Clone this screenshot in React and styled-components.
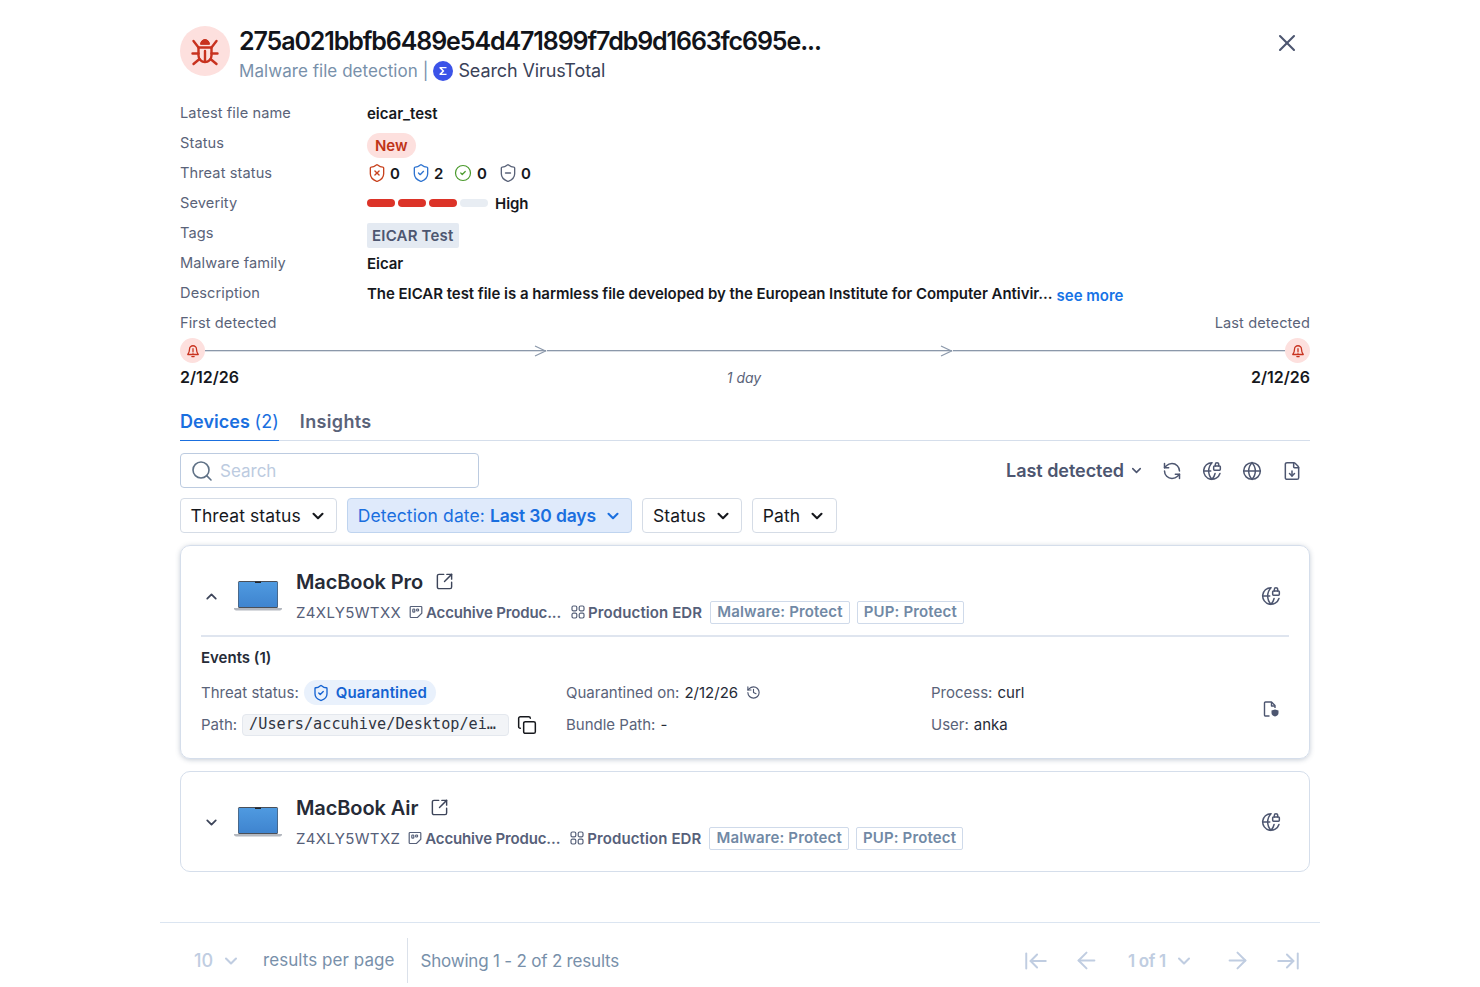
import React from "react";
import styled, { createGlobalStyle } from "styled-components";
import {
  X,
  ShieldX,
  ShieldCheck,
  ShieldMinus,
  CircleCheck,
  ChevronDown,
  ChevronUp,
  Search as SearchIcon,
  RefreshCcw,
  Globe,
  GlobeLock,
  FileDown,
  SquareArrowOutUpRight,
  Copy,
  History,
  ArrowLeft,
  ArrowRight,
  ArrowLeftToLine,
  ArrowRightToLine,
} from "lucide-react";

const GlobalStyle = createGlobalStyle`
  html, body { margin: 0; padding: 0; background: #fff; }
  body { font-family: Inter, "Noto Sans", sans-serif; color: #16181d; overflow: hidden; }
  * { box-sizing: border-box; }
`;

const BugIcon = () => (
  <svg width="30" height="30" viewBox="0 0 30 30" fill="none" stroke="#c8321f" strokeWidth="2.400" strokeLinecap="round" strokeLinejoin="round">
    <path d="M10.500 8a4.500 4.500 0 0 1 9 0z" fill="#c8321f" strokeWidth="1" />
    <path d="M8.500 11.500h13v8a6.500 6.500 0 0 1-13 0z" />
    <path d="M15 15v10M3.500 5l5 6.500M26.500 5l-5 6.500M2.500 17.500h6M27.500 17.500h-6M3.500 28l6-5M26.500 28l-6-5" />
  </svg>
);

const SigmaLogo = () => (
  <svg width="20" height="20" viewBox="0 0 20 20">
    <circle cx="10" cy="10" r="10" fill="#3b53e8" />
    <path d="M6.500 6h7v1.300H8.800L11.400 10l-2.600 2.700h4.700V14h-7v-1.200L9.300 10 6.500 7.200z" fill="#fff" />
  </svg>
);

const BellAlert = () => (
  <svg width="14" height="14" viewBox="0 0 24 24" fill="none" stroke="#c8321f" strokeWidth="2.200" strokeLinecap="round" strokeLinejoin="round">
    <path d="M12 3a6 6 0 0 0-6 6c0 5-1.500 7-3 9h18c-1.500-2-3-4-3-9a6 6 0 0 0-6-6z" />
    <path d="M10 21.500h4M12 8v5M12 15.500v.2" />
  </svg>
);

const OrgIcon = () => (
  <svg width="14" height="14" viewBox="0 0 14 14" fill="none" stroke="#566079" strokeWidth="1.200">
    <path d="M2 1.500h10a.8.8 0 0 1 .8.8v6L8.500 12.500H2a.8.8 0 0 1-.8-.8V2.300a.8.8 0 0 1 .8-.8z" />
    <rect x="3.800" y="4" width="2" height="3.200" rx=".8" />
    <rect x="7.600" y="4" width="2" height="2" rx=".8" />
  </svg>
);

const GroupIcon = () => (
  <svg width="14" height="14" viewBox="0 0 14 14" fill="none" stroke="#566079" strokeWidth="1.200">
    <rect x="1" y="1" width="4.800" height="4.800" rx="1.400" />
    <rect x="8.200" y="1" width="4.800" height="4.800" rx="1.400" />
    <rect x="1" y="8.200" width="4.800" height="4.800" rx="1.400" />
    <rect x="8.200" y="8.200" width="4.800" height="4.800" rx="1.400" />
  </svg>
);

const FileShield = () => (
  <svg width="20" height="20" viewBox="0 0 20 20" fill="none" stroke="#4d5670" strokeWidth="1.400" strokeLinejoin="round">
    <path d="M8.500 17H4.500a1 1 0 0 1-1-1V4a1 1 0 0 1 1-1h6l3.500 3.500V9" />
    <path d="M10.500 3v4h3.500" />
    <path d="M14 10.500l3.500 1v2.500c0 1.800-1.500 3-3.500 3.500-2-.5-3.500-1.700-3.500-3.500v-2.500z" fill="#4d5670" stroke="none" />
  </svg>
);

const LaptopArt = ({ id }) => (
  <svg width="50" height="36" viewBox="0 0 50 36">
    <defs>
      <linearGradient id={id} x1="0" y1="0" x2="0" y2="1">
        <stop offset="0" stopColor="#4f9ae0" />
        <stop offset="1" stopColor="#3f84cf" />
      </linearGradient>
    </defs>
    <rect x="5" y="3" width="40" height="27" rx="1.500" fill="#4a4f58" />
    <rect x="5.600" y="4" width="38.800" height="25" fill={`url(#${id})`} />
    <rect x="22" y="3.500" width="6" height="1.500" fill="#23262b" />
    <path d="M1 30h48v1c0 .8-1.500 1.500-3 1.500H4c-1.500 0-3-.7-3-1.500z" fill="#b4b8bf" />
  </svg>
);

const Page = styled.div`
  width: 1480px;
  height: 987px;
  display: flex;
  flex-direction: column;
`;

const Content = styled.div`
  padding: 26px 170px 0 180px;
  flex: 1;
`;

const Header = styled.div`
  display: flex;
  align-items: flex-start;
  height: 60px;
`;

const BugCircle = styled.div`
  width: 50px;
  height: 50px;
  border-radius: 50%;
  background: #fde0de;
  display: flex;
  align-items: center;
  justify-content: center;
  margin-right: 9px;
  flex: none;
`;

const HeadText = styled.div`
  flex: 1;
`;

const Title = styled.div`
  font-size: 25px;
  line-height: 30px;
  font-weight: 600;
  letter-spacing: -1.1px;
  color: #12141a;
`;

const SubLine = styled.div`
  display: flex;
  align-items: center;
  font-size: 17px;
  line-height: 30px;
  letter-spacing: 0.05px;
  color: #7890aa;
  gap: 5px;
`;

const VtLink = styled.span`
  color: #3a4258;
  font-size: 18px;
  letter-spacing: -0.1px;
`;

const CloseBtn = styled.div`
  margin: 3px 9px 0 0;
  color: #4d5670;
  display: flex;
`;

const Details = styled.div`
  margin-top: 12px;
`;

const Row = styled.div`
  display: grid;
  grid-template-columns: 187px 1fr;
  height: 30px;
  align-items: center;
  font-size: 15px;
`;

const Label = styled.div`
  color: #5a6379;
  font-size: 14.600px;
  letter-spacing: 0.1px;
`;

const Value = styled.div`
  display: flex;
  align-items: center;
  font-weight: 600;
  font-size: 15px;
  letter-spacing: -0.04px;
  color: #16181d;
  white-space: nowrap;
`;

const NewBadge = styled.span`
  background: #fde0de;
  color: #bf3317;
  font-weight: 600;
  font-size: 15px;
  padding: 0 8px;
  height: 25px;
  line-height: 25px;
  border-radius: 13px;
  margin-top: 5px;
`;

const ThreatCount = styled.span`
  display: inline-flex;
  align-items: center;
  width: ${(p) => p.$w}px;
  gap: ${(p) => p.$gap}px;
  color: ${(p) => p.$color};
  b {
    color: #16181d;
    font-weight: 600;
  }
`;

const SeverityBars = styled.div`
  display: flex;
  gap: 3px;
  margin-right: 7px;
`;

const SevBar = styled.span`
  width: 28px;
  height: 8px;
  border-radius: 4px;
  background: ${(p) => (p.$on ? "#dc3328" : "#e8edf3")};
`;

const TagChip = styled.span`
  background: #e4eaf2;
  color: #4d5670;
  font-weight: 600;
  padding: 0 5px;
  height: 25px;
  line-height: 25px;
  border-radius: 2px;
  margin-top: 5px;
  letter-spacing: 0.2px;
`;

const SeeMore = styled.span`
  color: #1673e6;
  font-weight: 600;
  margin: 4px 0 0 4px;
  letter-spacing: 0;
`;

const TimeHead = styled.div`
  display: flex;
  justify-content: space-between;
  align-items: center;
  height: 30px;
`;

const TimeLine = styled.div`
  display: flex;
  align-items: center;
  height: 25px;
`;

const BellDot = styled.div`
  width: 25px;
  height: 25px;
  border-radius: 50%;
  background: #fde0de;
  display: flex;
  align-items: center;
  justify-content: center;
  flex: none;
`;

const LineSeg = styled.div`
  flex: ${(p) => p.$grow} 1 0;
  height: 1px;
  background: #8b98aa;
  box-shadow: 0 0.5px 0 #b7c0cc;
`;

const ArrowHead = styled.svg`
  flex: none;
  margin-left: -12px;
`;

const TimeFoot = styled.div`
  display: flex;
  justify-content: space-between;
  align-items: center;
  height: 28px;
  font-weight: 600;
  font-size: 16px;
`;

const Duration = styled.span`
  font-style: italic;
  font-weight: 400;
  color: #5a6379;
  font-size: 14px;
  margin-left: -2px;
`;

const Tabs = styled.div`
  display: flex;
  gap: 21px;
  margin-top: 15px;
  height: 35px;
  border-bottom: 1.500px solid #d5deeb;
`;

const Tab = styled.div`
  font-size: 18px;
  font-weight: 600;
  letter-spacing: ${(p) => (p.$active ? 0.05 : 0.35)}px;
  line-height: 32px;
  height: 35px;
  color: ${(p) => (p.$active ? "#1a6fdf" : "#5a6379")};
  border-bottom: ${(p) => (p.$active ? "1.500px solid #1a6fdf" : "none")};
  span {
    font-weight: 400;
  }
`;

const Toolbar = styled.div`
  display: flex;
  align-items: center;
  justify-content: space-between;
  margin-top: 12px;
`;

const SearchBox = styled.div`
  width: 299px;
  height: 35px;
  border: 1.500px solid #bccbe0;
  border-radius: 4px;
  display: flex;
  align-items: center;
  padding-left: 9px;
  gap: 6px;
  font-size: 17px;
  color: #bccbe0;
  svg {
    color: #5f7186;
  }
`;

const ToolRight = styled.div`
  display: flex;
  align-items: center;
  color: #4d5670;
`;

const SortBtn = styled.div`
  display: flex;
  align-items: center;
  gap: 5px;
  font-size: 18px;
  font-weight: 600;
  color: #4d5670;
  letter-spacing: -0.05px;
  margin-right: 18px;
`;

const ToolIcons = styled.div`
  display: flex;
  gap: 20px;
  margin-right: 8px;
`;

const Filters = styled.div`
  display: flex;
  gap: 10px;
  margin-top: 10px;
`;

const Filter = styled.div`
  height: 35px;
  display: flex;
  align-items: center;
  gap: 8px;
  padding: 0 9.500px;
  font-size: 17.500px;
  letter-spacing: 0.1px;
  border-radius: 4px;
  border: 1.500px solid ${(p) => (p.$on ? "#bfd4ef" : "#d5dce6")};
  background: ${(p) => (p.$on ? "#dfeafb" : "#fff")};
  color: ${(p) => (p.$on ? "#1a6fdf" : "#16181d")};
  b {
    font-weight: 600;
    letter-spacing: -0.15px;
  }
`;

const Card = styled.div`
  margin-top: ${(p) => p.$top}px;
  border: 1.500px solid #d5deeb;
  border-radius: 10px;
  padding: 0 20px;
  box-shadow: ${(p) => (p.$open ? "0 1px 5px rgba(70, 90, 120, 0.3)" : "none")};
`;

const DeviceRow = styled.div`
  display: flex;
  align-items: center;
  height: ${(p) => p.$h}px;
  padding-top: ${(p) => p.$pt}px;
`;

const Toggle = styled.div`
  width: 20px;
  margin-right: 12px;
  display: flex;
  justify-content: center;
  color: #3d455a;
`;

const Laptop = styled.div`
  margin-right: 13px;
  display: flex;
`;

const DeviceInfo = styled.div`
  flex: 1;
`;

const DeviceName = styled.div`
  display: flex;
  align-items: center;
  gap: 12px;
  font-size: 20px;
  line-height: 26px;
  font-weight: 600;
  letter-spacing: -0.1px;
  color: #262b37;
  svg {
    color: #3d455a;
  }
`;

const Meta = styled.div`
  display: flex;
  align-items: center;
  font-size: 15px;
  margin-top: 6px;
  color: #566079;
  white-space: nowrap;
`;

const Serial = styled.span`
  margin-right: 8px;
  letter-spacing: 0.35px;
`;

const MetaStrong = styled.span`
  display: inline-flex;
  align-items: center;
  gap: 3px;
  font-weight: 600;
  margin-right: ${(p) => p.$mr}px;
  letter-spacing: ${(p) => p.$ls}px;
`;

const Policy = styled.span`
  border: 1.500px solid #cfdaea;
  border-radius: 2px;
  color: #7189a5;
  font-weight: 600;
  height: 23px;
  line-height: 20px;
  padding: 0 6px;
  margin-right: 7px;
  font-size: 15px;
  letter-spacing: 0.15px;
`;

const CardIcon = styled.div`
  color: #4d5670;
  display: flex;
  margin-right: 8px;
`;

const Divider = styled.div`
  height: 1.500px;
  background: #dfe5ef;
`;

const EventsTitle = styled.div`
  font-size: 15px;
  font-weight: 600;
  color: #262b37;
  margin-top: 12px;
  line-height: 18px;
`;

const EventsBody = styled.div`
  display: flex;
  align-items: flex-start;
  margin-top: 10px;
  height: 81px;
`;

const EventGrid = styled.div`
  flex: 1;
  display: grid;
  grid-template-columns: 365px 365px 1fr;
  grid-auto-rows: 32px;
  font-size: 15px;
`;

const Field = styled.div`
  display: flex;
  align-items: center;
  gap: 5px;
  color: #5a6379;
  white-space: nowrap;
  b {
    font-weight: 400;
    color: #262b37;
  }
  svg {
    color: #4d5670;
  }
`;

const HistoryMark = styled.span`
  display: flex;
  margin-left: 3px;
`;

const QuarantinedPill = styled.span`
  display: inline-flex;
  align-items: center;
  gap: 6px;
  height: 25px;
  padding: 0 9px 0 8px;
  border-radius: 13px;
  background: #e9f1fc;
  color: #1563d2;
  font-weight: 600;
  letter-spacing: 0.15px;
  svg {
    color: #1563d2;
  }
`;

const PathCode = styled.span`
  font-family: "DejaVu Sans Mono", "Liberation Mono", monospace;
  font-size: 15.200px;
  background: #f2f4f7;
  border: 1px solid #e4e8ee;
  border-radius: 4px;
  height: 22px;
  line-height: 19px;
  width: 267px;
  padding: 0 6px;
  color: #2f3542;
`;

const CopyBtn = styled.span`
  display: flex;
  margin-left: 3px;
  svg {
    color: #16181d;
  }
`;

const SideIcon = styled.div`
  color: #4d5670;
  display: flex;
  margin: 22px 8px 0 0;
`;

const Footer = styled.div`
  margin: 0 160px;
  border-top: 1.500px solid #dbe5f1;
  height: 65px;
  display: flex;
  align-items: center;
  font-size: 17px;
  color: #7890aa;
  padding: 15px 0 4px;
`;

const PerPage = styled.div`
  display: flex;
  align-items: center;
  gap: 8px;
  color: #c0cde1;
  margin-left: 34px;
  margin-right: 22px;
  font-size: 18px;
  font-weight: 500;
`;

const PerPageLabel = styled.div`
  padding-right: 13px;
  height: 45px;
  line-height: 45px;
  border-right: 1.500px solid #dbe1ea;
  letter-spacing: 0.05px;
`;

const Showing = styled.div`
  margin-left: 12px;
  flex: 1;
  letter-spacing: -0.2px;
`;

const Pager = styled.div`
  display: flex;
  align-items: center;
  color: #c0cde1;
  gap: 24px;
  margin-right: 19px;
`;

const PageSelect = styled.div`
  display: flex;
  align-items: center;
  gap: 8px;
  font-weight: 600;
  letter-spacing: -0.3px;
  margin: 0 6px 0 4px;
`;

const Arrow = () => (
  <ArrowHead width="13" height="12" viewBox="0 0 13 12" fill="none" stroke="#8b98aa" strokeWidth="1.200">
    <path d="M1 1l10.500 5L1 11" />
  </ArrowHead>
);

const Device = ({ name, serial, id, open, top, children }) => (
  <Card $top={top} $open={open}>
    <DeviceRow $h={open ? 89 : 99} $pt={open ? 11 : 2}>
      <Toggle>{open ? <ChevronUp size={17} strokeWidth={2.500} /> : <ChevronDown size={17} strokeWidth={2.500} />}</Toggle>
      <Laptop>
        <LaptopArt id={id} />
      </Laptop>
      <DeviceInfo>
        <DeviceName>
          {name}
          <SquareArrowOutUpRight size={19} strokeWidth={1.800} />
        </DeviceName>
        <Meta>
          <Serial>{serial}</Serial>
          <MetaStrong $mr={10} $ls={-0.15}>
            <OrgIcon />
            Accuhive Produc...
          </MetaStrong>
          <MetaStrong $mr={8} $ls={0.1}>
            <GroupIcon />
            Production EDR
          </MetaStrong>
          <Policy>Malware: Protect</Policy>
          <Policy>PUP: Protect</Policy>
        </Meta>
      </DeviceInfo>
      <CardIcon>
        <GlobeLock size={20} strokeWidth={1.800} />
      </CardIcon>
    </DeviceRow>
    {children}
  </Card>
);

export default function App() {
  return (
    <Page>
      <GlobalStyle />
      <Content>
        <Header>
          <BugCircle>
            <BugIcon />
          </BugCircle>
          <HeadText>
            <Title>275a021bbfb6489e54d471899f7db9d1663fc695e...</Title>
            <SubLine>
              Malware file detection | <SigmaLogo />
              <VtLink>Search VirusTotal</VtLink>
            </SubLine>
          </HeadText>
          <CloseBtn>
            <X size={28} strokeWidth={1.800} />
          </CloseBtn>
        </Header>

        <Details>
          <Row>
            <Label>Latest file name</Label>
            <Value>eicar_test</Value>
          </Row>
          <Row>
            <Label>Status</Label>
            <Value>
              <NewBadge>New</NewBadge>
            </Value>
          </Row>
          <Row>
            <Label>Threat status</Label>
            <Value>
              <ThreatCount $color="#c8431f" $w={44} $gap={3}>
                <ShieldX size={20} strokeWidth={1.600} />
                <b>0</b>
              </ThreatCount>
              <ThreatCount $color="#2f74d0" $w={43} $gap={3}>
                <ShieldCheck size={20} strokeWidth={1.600} />
                <b>2</b>
              </ThreatCount>
              <ThreatCount $color="#4a9a2c" $w={44} $gap={5}>
                <CircleCheck size={18} strokeWidth={1.600} />
                <b>0</b>
              </ThreatCount>
              <ThreatCount $color="#5a6379" $w={44} $gap={3}>
                <ShieldMinus size={20} strokeWidth={1.600} />
                <b>0</b>
              </ThreatCount>
            </Value>
          </Row>
          <Row>
            <Label>Severity</Label>
            <Value>
              <SeverityBars>
                <SevBar $on />
                <SevBar $on />
                <SevBar $on />
                <SevBar />
              </SeverityBars>
              High
            </Value>
          </Row>
          <Row>
            <Label>Tags</Label>
            <Value>
              <TagChip>EICAR Test</TagChip>
            </Value>
          </Row>
          <Row>
            <Label>Malware family</Label>
            <Value>Eicar</Value>
          </Row>
          <Row>
            <Label>Description</Label>
            <Value>
              The EICAR test file is a harmless file developed by the European Institute for Computer Antivir...
              <SeeMore>see more</SeeMore>
            </Value>
          </Row>
        </Details>

        <TimeHead>
          <Label>First detected</Label>
          <Label>Last detected</Label>
        </TimeHead>
        <TimeLine>
          <BellDot>
            <BellAlert />
          </BellDot>
          <LineSeg $grow={342} />
          <Arrow />
          <LineSeg $grow={405} />
          <Arrow />
          <LineSeg $grow={333} />
          <BellDot>
            <BellAlert />
          </BellDot>
        </TimeLine>
        <TimeFoot>
          <span>2/12/26</span>
          <Duration>1 day</Duration>
          <span>2/12/26</span>
        </TimeFoot>

        <Tabs>
          <Tab $active>
            Devices <span>(2)</span>
          </Tab>
          <Tab>Insights</Tab>
        </Tabs>

        <Toolbar>
          <SearchBox>
            <SearchIcon size={24} strokeWidth={1.600} />
            Search
          </SearchBox>
          <ToolRight>
            <SortBtn>
              Last detected
              <ChevronDown size={15} strokeWidth={2.500} />
            </SortBtn>
            <ToolIcons>
              <RefreshCcw size={20} strokeWidth={1.800} />
              <GlobeLock size={20} strokeWidth={1.800} />
              <Globe size={20} strokeWidth={1.800} />
              <FileDown size={20} strokeWidth={1.800} />
            </ToolIcons>
          </ToolRight>
        </Toolbar>

        <Filters>
          <Filter>
            Threat status
            <ChevronDown size={18} strokeWidth={2.800} />
          </Filter>
          <Filter $on>
            <span>
              Detection date: <b>Last 30 days</b>
            </span>
            <ChevronDown size={18} strokeWidth={2.800} />
          </Filter>
          <Filter>
            Status
            <ChevronDown size={18} strokeWidth={2.800} />
          </Filter>
          <Filter>
            Path
            <ChevronDown size={18} strokeWidth={2.800} />
          </Filter>
        </Filters>

        <Device name="MacBook Pro" serial="Z4XLY5WTXX" id="lap1" top={12} open>
          <Divider />
          <EventsTitle>Events (1)</EventsTitle>
          <EventsBody>
            <EventGrid>
              <Field>
                Threat status:
                <QuarantinedPill>
                  <ShieldCheck size={18} strokeWidth={1.800} />
                  Quarantined
                </QuarantinedPill>
              </Field>
              <Field>
                Quarantined on: <b>2/12/26</b>
                <HistoryMark>
                  <History size={15} strokeWidth={1.800} />
                </HistoryMark>
              </Field>
              <Field>
                Process: <b>curl</b>
              </Field>
              <Field>
                Path:
                <PathCode>/Users/accuhive/Desktop/ei…</PathCode>
                <CopyBtn>
                  <Copy size={20} strokeWidth={1.800} />
                </CopyBtn>
              </Field>
              <Field>
                Bundle Path: <b>-</b>
              </Field>
              <Field>
                User: <b>anka</b>
              </Field>
            </EventGrid>
            <SideIcon>
              <FileShield />
            </SideIcon>
          </EventsBody>
        </Device>

        <Device name="MacBook Air" serial="Z4XLY5WTXZ" id="lap2" top={12} />
      </Content>

      <Footer>
        <PerPage>
          10
          <ChevronDown size={20} strokeWidth={2.500} />
        </PerPage>
        <PerPageLabel>results per page</PerPageLabel>
        <Showing>Showing 1 - 2 of 2 results</Showing>
        <Pager>
          <ArrowLeftToLine size={26} strokeWidth={1.800} />
          <ArrowLeft size={27} strokeWidth={1.800} />
          <PageSelect>
            1 of 1
            <ChevronDown size={20} strokeWidth={2.500} />
          </PageSelect>
          <ArrowRight size={27} strokeWidth={1.800} />
          <ArrowRightToLine size={26} strokeWidth={1.800} />
        </Pager>
      </Footer>
    </Page>
  );
}
